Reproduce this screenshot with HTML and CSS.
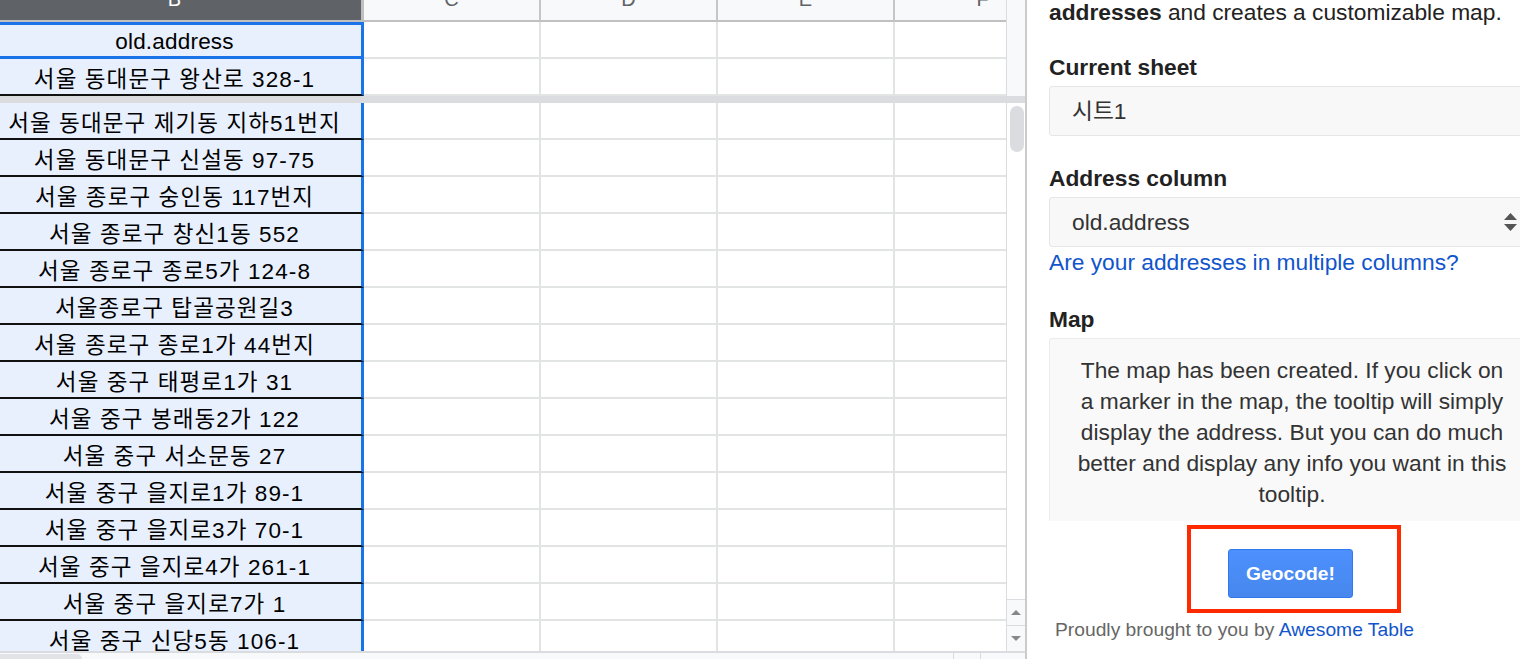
FILE: index.html
```html
<!DOCTYPE html>
<html lang="ko">

<head>
    <meta charset="UTF-8">
    <meta name="viewport" content="width=device-width, initial-scale=1.0">
    <title>Geocode by Awesome Table</title>
    <link rel="stylesheet" href="styles.css">
</head>

<body>

    <div class="sheet">
        <div class="sheet-main">
            <div class="grid">
                <div class="grid-inner">
                    <div class="row head-row">
                        <div class="head b">B</div>
                        <div class="head">C</div>
                        <div class="head">D</div>
                        <div class="head">E</div>
                        <div class="head">F</div>
                    </div>
                    <div class="row">
                        <div class="cell b sel">old.address</div>
                        <div class="cell"></div><div class="cell"></div><div class="cell"></div><div class="cell"></div>
                    </div>
                    <div class="row">
                        <div class="cell b">서울 동대문구 왕산로 328-1</div>
                        <div class="cell"></div><div class="cell"></div><div class="cell"></div><div class="cell"></div>
                    </div>
                    <div class="freeze"></div>
                    <div class="row">
                        <div class="cell b">서울 동대문구 제기동 지하51번지</div>
                        <div class="cell"></div><div class="cell"></div><div class="cell"></div><div class="cell"></div>
                    </div>
                    <div class="row">
                        <div class="cell b">서울 동대문구 신설동 97-75</div>
                        <div class="cell"></div><div class="cell"></div><div class="cell"></div><div class="cell"></div>
                    </div>
                    <div class="row">
                        <div class="cell b">서울 종로구 숭인동 117번지</div>
                        <div class="cell"></div><div class="cell"></div><div class="cell"></div><div class="cell"></div>
                    </div>
                    <div class="row">
                        <div class="cell b">서울 종로구 창신1동 552</div>
                        <div class="cell"></div><div class="cell"></div><div class="cell"></div><div class="cell"></div>
                    </div>
                    <div class="row">
                        <div class="cell b">서울 종로구 종로5가 124-8</div>
                        <div class="cell"></div><div class="cell"></div><div class="cell"></div><div class="cell"></div>
                    </div>
                    <div class="row">
                        <div class="cell b">서울종로구 탑골공원길3</div>
                        <div class="cell"></div><div class="cell"></div><div class="cell"></div><div class="cell"></div>
                    </div>
                    <div class="row">
                        <div class="cell b">서울 종로구 종로1가 44번지</div>
                        <div class="cell"></div><div class="cell"></div><div class="cell"></div><div class="cell"></div>
                    </div>
                    <div class="row">
                        <div class="cell b">서울 중구 태평로1가 31</div>
                        <div class="cell"></div><div class="cell"></div><div class="cell"></div><div class="cell"></div>
                    </div>
                    <div class="row">
                        <div class="cell b">서울 중구 봉래동2가 122</div>
                        <div class="cell"></div><div class="cell"></div><div class="cell"></div><div class="cell"></div>
                    </div>
                    <div class="row">
                        <div class="cell b">서울 중구 서소문동 27</div>
                        <div class="cell"></div><div class="cell"></div><div class="cell"></div><div class="cell"></div>
                    </div>
                    <div class="row">
                        <div class="cell b">서울 중구 을지로1가 89-1</div>
                        <div class="cell"></div><div class="cell"></div><div class="cell"></div><div class="cell"></div>
                    </div>
                    <div class="row">
                        <div class="cell b">서울 중구 을지로3가 70-1</div>
                        <div class="cell"></div><div class="cell"></div><div class="cell"></div><div class="cell"></div>
                    </div>
                    <div class="row">
                        <div class="cell b">서울 중구 을지로4가 261-1</div>
                        <div class="cell"></div><div class="cell"></div><div class="cell"></div><div class="cell"></div>
                    </div>
                    <div class="row">
                        <div class="cell b">서울 중구 을지로7가 1</div>
                        <div class="cell"></div><div class="cell"></div><div class="cell"></div><div class="cell"></div>
                    </div>
                    <div class="row">
                        <div class="cell b">서울 중구 신당5동 106-1</div>
                        <div class="cell"></div><div class="cell"></div><div class="cell"></div><div class="cell"></div>
                    </div>
                </div>
            </div>

            <div class="vscroll">
                <div class="vs-top"></div>
                <div class="vs-band"></div>
                <div class="vs-track">
                    <div class="vs-thumb"></div>
                </div>
                <div class="vs-btn"><span class="arrow-up"></span></div>
                <div class="vs-btn"><span class="arrow-down"></span></div>
            </div>
        </div>

        <div class="hscroll">
            <div class="hs-thumb"></div>
            <div class="hs-boxes">
                <span></span><span></span>
            </div>
        </div>
    </div>

    <div class="panel">
        <p class="intro"><b>addresses</b> and creates a customizable map.</p>

        <div class="label">Current sheet</div>
        <div class="field">시트1</div>

        <div class="label">Address column</div>
        <div class="field">
            <span>old.address</span>
            <svg class="updown" width="13" height="19" viewBox="0 0 13 19">
                <path d="M6.5 0 L13 7 L0 7 Z" fill="#555"/>
                <path d="M0 11 L13 11 L6.5 18 Z" fill="#555"/>
            </svg>
        </div>
        <a class="multi-link" href="#">Are your addresses in multiple columns?</a>

        <div class="label map-label">Map</div>
        <div class="map-box">
            The map has been created. If you click on a marker in the map, the tooltip will simply display the address. But you can do much better and display any info you want in this tooltip.
        </div>

        <div class="geo-frame">
            <button class="geo-btn">Geocode!</button>
        </div>

        <div class="credit">Proudly brought to you by <a href="#">Awesome Table</a></div>
    </div>

</body>

</html>
```

FILE: styles.css
```css
body {
    margin: 0;
    width: 1520px;
    height: 659px;
    overflow: hidden;
    display: flex;
    background: #fff;
    font-family: "Liberation Sans", "Noto Sans CJK KR", sans-serif;
}

/* sheet */

.sheet {
    flex: none;
    width: 1025px;
    display: flex;
    flex-direction: column;
}

.sheet-main {
    display: flex;
    height: 651px;
    overflow: hidden;
}

.grid {
    flex: 1;
    overflow: hidden;
}

.grid-inner {
    margin-left: -12px;
}

.row {
    display: flex;
    height: 37px;
}

.head-row {
    height: 22px;
}

.head {
    flex: none;
    width: 177px;
    box-sizing: border-box;
    background: #f8f9fa;
    border-right: 2px solid #c4c7c5;
    border-bottom: 2px solid #c0c0c0;
    display: flex;
    align-items: flex-end;
    justify-content: center;
    padding-bottom: 11px;
    font-size: 20px;
    line-height: 20px;
    color: #5f6368;
}

.head.b {
    width: 376px;
    background: #5f6368;
    color: #fff;
    border-right: 3px solid #c0c0c0;
}

.cell {
    flex: none;
    width: 177px;
    box-sizing: border-box;
    border-right: 2px solid #e2e3e3;
    border-bottom: 2px solid #e2e3e3;
    display: flex;
    align-items: center;
    justify-content: center;
    padding-top: 1px;
    font-size: 22.5px;
    letter-spacing: 1.1px;
    white-space: nowrap;
    color: #000;
}

.cell.b {
    width: 376px;
    background: #e8f0fe;
    border-right: 3px solid #1a73e8;
    border-bottom-color: #111;
}

.cell.sel {
    border-top: 3px solid #1a73e8;
    border-bottom: 3px solid #1a73e8;
    padding-top: 3px;
    letter-spacing: 0.2px;
}

.freeze {
    height: 7px;
    background: #dadce0;
}

.vscroll {
    flex: none;
    width: 19px;
    box-sizing: border-box;
    border-left: 1px solid #dadce0;
    display: flex;
    flex-direction: column;
}

.vs-top {
    height: 96px;
    background: #f8f9fa;
}

.vs-band {
    height: 7px;
    background: #dadce0;
}

.vs-track {
    flex: 1;
    padding: 3px 1px 0 3px;
}

.vs-thumb {
    width: 14px;
    height: 46px;
    border-radius: 7px;
    background: #dadce0;
}

.vs-btn {
    height: 25px;
    border-top: 1px solid #dadce0;
    background: #f8f9fa;
    display: flex;
    align-items: center;
    justify-content: center;
}

.arrow-up {
    border-left: 5px solid transparent;
    border-right: 5px solid transparent;
    border-bottom: 5px solid #888;
}

.arrow-down {
    border-left: 5px solid transparent;
    border-right: 5px solid transparent;
    border-top: 5px solid #888;
}

.hscroll {
    height: 8px;
    box-sizing: border-box;
    border-top: 2px solid #dadce0;
    background: #f8f9fa;
    display: flex;
    justify-content: space-between;
}

.hs-thumb {
    width: 82px;
    height: 5px;
    margin-top: 1px;
    border-radius: 0 5px 0 0;
    background: #e1e3e6;
}

.hs-boxes {
    display: flex;
    margin-right: 18px;
}

.hs-boxes span {
    width: 26px;
    border-left: 1px solid #dadce0;
}

/* side panel */

.panel {
    flex: none;
    width: 530px;
    box-sizing: border-box;
    border-left: 2px solid #cbcbcb;
    padding: 0 22px;
    font-size: 22.75px;
    line-height: 26px;
    color: #333;
}

.intro {
    margin: -1px 0 0;
    color: #222;
}

.label {
    margin: 29px 0 6px;
    font-weight: bold;
    color: #222;
}

.field {
    width: 486px;
    height: 50px;
    box-sizing: border-box;
    border: 1px solid #e6e6e6;
    border-radius: 3px;
    background: #f8f8f8;
    padding: 0 17px 0 22px;
    display: flex;
    align-items: center;
    justify-content: space-between;
    color: #333;
}

.multi-link {
    display: block;
    margin-top: 2px;
    color: #1155cc;
    text-decoration: none;
}

.map-label {
    margin-top: 31px;
}

.map-box {
    width: 486px;
    height: 183px;
    box-sizing: border-box;
    overflow: hidden;
    border: 1px solid #ececec;
    border-bottom: none;
    border-radius: 3px 3px 0 0;
    background: #f9f9f9;
    padding: 16px 26px 0;
    text-align: center;
    line-height: 31px;
    color: #333;
}

.geo-frame {
    width: fit-content;
    margin: 4px 0 0 138px;
    border: 4px solid #ff2a00;
    padding: 20px 44px 11px 37px;
}

.geo-btn {
    display: block;
    width: 125px;
    height: 49px;
    box-sizing: border-box;
    border: 1px solid #3079ed;
    border-radius: 3px;
    background: linear-gradient(#4d90fe, #4787ed);
    color: #fff;
    font-family: "Liberation Sans", sans-serif;
    font-size: 19.25px;
    font-weight: bold;
}

.credit {
    margin-top: 4px;
    padding-left: 6px;
    font-size: 19.25px;
    color: #666;
}

.credit a {
    color: #1155cc;
    text-decoration: none;
}
```
